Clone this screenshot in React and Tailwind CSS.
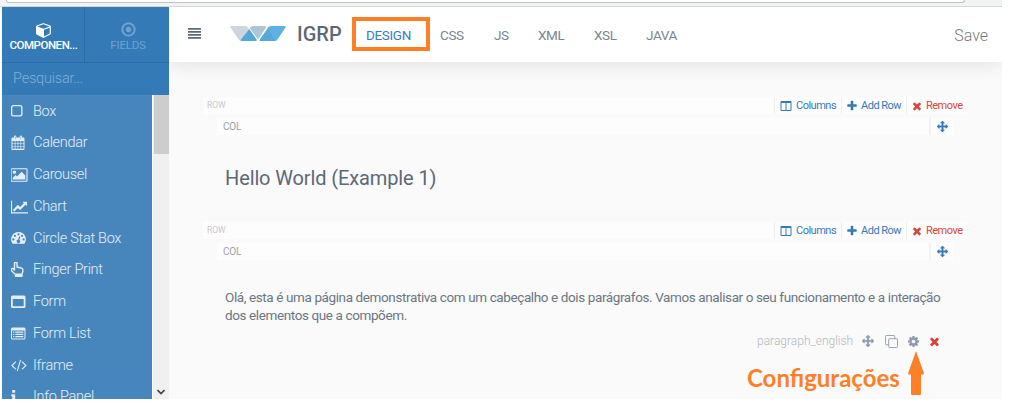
import React from "react";

const Icon = ({ box = "0 0 1792 1792", className, children }) => (
  <svg viewBox={box} className={`shrink-0 ${className}`} fill="currentColor" fillRule="evenodd">{children}</svg>
);

const Plus = ({ className }) => (
  <Icon className={className}><path d="M1600 736v192q0 40-28 68t-68 28h-416v416q0 40-28 68t-68 28h-192q-40 0-68-28t-28-68v-416h-416q-40 0-68-28t-28-68v-192q0-40 28-68t68-28h416v-416q0-40 28-68t68-28h192q40 0 68 28t28 68v416h416q40 0 68 28t28 68z" /></Icon>
);
const Times = ({ className }) => (
  <Icon className={className}><path d="M1490 1322q0 40-28 68l-136 136q-28 28-68 28t-68-28l-294-294-294 294q-28 28-68 28t-68-28l-136-136q-28-28-28-68t28-68l294-294-294-294q-28-28-28-68t28-68l136-136q28-28 68-28t68 28l294 294 294-294q28-28 68-28t68 28l136 136q28 28 28 68t-28 68l-294 294 294 294q28 28 28 68z" /></Icon>
);
const Cog = ({ className }) => (
  <Icon className={className}><path d="M1152 896q0-106-75-181t-181-75-181 75-75 181 75 181 181 75 181-75 75-181zm512-109v222q0 12-8 23t-20 13l-185 28q-19 54-39 91 35 50 107 138 10 12 10 25t-9 23q-27 37-99 108t-94 71q-12 0-26-9l-138-108q-44 23-91 38-16 136-29 186-7 28-36 28h-222q-14 0-24.5-8.5t-11.5-21.5l-28-184q-49-16-90-37l-141 107q-10 9-25 9-14 0-25-11-126-114-165-168-7-10-7-23 0-12 8-23 15-21 51-66.5t54-70.5q-27-50-41-99l-183-27q-13-2-21-12.5t-8-23.5v-222q0-12 8-23t19-13l186-28q14-46 39-92-40-57-107-138-10-12-10-24 0-10 9-23 26-36 98.5-107.5t94.5-71.5q13 0 26 10l138 107q44-23 91-38 16-136 29-186 7-28 36-28h222q14 0 24.5 8.5t11.5 21.5l28 184q49 16 90 37l142-107q9-9 24-9 13 0 25 10 129 119 165 170 7 8 7 22 0 12-8 23-15 21-51 66.5t-54 70.5q26 50 41 98l183 28q13 2 21 12.5t8 23.5z" /></Icon>
);
const Arrows = ({ className }) => (
  <Icon className={className}><path stroke="currentColor" strokeWidth="50" d="M1792 896q0 26-19 45l-256 256q-19 19-45 19t-45-19-19-45v-128h-384v384h128q26 0 45 19t19 45-19 45l-256 256q-19 19-45 19t-45-19l-256-256q-19-19-19-45t19-45 45-19h128v-384h-384v128q0 26-19 45t-45 19-45-19l-256-256q-19-19-19-45t19-45l256-256q19-19 45-19t45 19 19 45v128h384v-384h-128q-26 0-45-19t-19-45 19-45l256-256q19-19 45-19t45 19l256 256q19 19 19 45t-19 45-45 19h-128v384h384v-128q0-26 19-45t45-19 45 19l256 256q19 19 19 45z" /></Icon>
);
const Clone = ({ className }) => (
  <svg viewBox="0 0 14 14" className={`shrink-0 ${className}`} fill="none" stroke="currentColor">
    <rect x="4" y="4" width="9.500" height="9.500" rx="1" />
    <path d="M4 10.500h-2.500a1 1 0 0 1-1-1v-8a1 1 0 0 1 1-1h8a1 1 0 0 1 1 1v2.500" />
  </svg>
);
const Columns = ({ className }) => (
  <Icon className={className} box="0 0 12 12"><path d="M1.500 1h9a1 1 0 0 1 1 1v8a1 1 0 0 1-1 1h-9a1 1 0 0 1-1-1v-8a1 1 0 0 1 1-1zM1.500 3v7h4v-7zM6.500 3v7h4v-7z" /></Icon>
);
const Cube = ({ className }) => (
  <Icon className={className}><path d="M896 1629l640-349v-636l-640 233v752zm-64-865l698-254-698-254-698 254zm832-252v768q0 35-18 65t-49 47l-704 384q-28 16-61 16t-61-16l-704-384q-31-17-49-47t-18-65v-768q0-40 23-73t61-47l704-256q22-8 44-8t44 8l704 256q38 14 61 47t23 73z" /></Icon>
);
const DotCircle = ({ className }) => (
  <svg viewBox="0 0 14 14" className={`shrink-0 ${className}`}>
    <circle cx="7" cy="7" r="5.100" fill="none" stroke="currentColor" strokeWidth="1.700" />
    <circle cx="7" cy="7" r="2.200" fill="currentColor" />
  </svg>
);

const glyph = "h-4 w-[17px]";
const components = [
  ["Box", <Icon className={glyph} box="0 0 17 16"><path d="M2.500 2h6.500a2.500 2.500 0 0 1 2.500 2.500v6.500a2.500 2.500 0 0 1-2.500 2.500h-6.500a2.500 2.500 0 0 1-2.500-2.500v-6.500a2.500 2.500 0 0 1 2.500-2.500zM2.600 3.200a1.300 1.300 0 0 0-1.300 1.300v6.500a1.300 1.300 0 0 0 1.300 1.300h6.300a1.300 1.300 0 0 0 1.300-1.300v-6.500a1.300 1.300 0 0 0-1.300-1.300z" /></Icon>],
  ["Calendar", <Icon className={glyph} box="0.500 0 17 16"><path d="M2 2.500h1.500v-1a1 1 0 0 1 1-1h.3a1 1 0 0 1 1 1v1h3.400v-1a1 1 0 0 1 1-1h.3a1 1 0 0 1 1 1v1h1.500a1 1 0 0 1 1 1v10.500a1 1 0 0 1-1 1h-11a1 1 0 0 1-1-1v-10.500a1 1 0 0 1 1-1zM2 6v1.900h2.200v-1.900zM4.900 6v1.900h2.200v-1.900zM7.800 6v1.900h2.200v-1.900zM10.700 6v1.900h2.300v-1.900zM2 8.600v2.300h2.200v-2.300zM4.900 8.600v2.300h2.200v-2.300zM7.800 8.600v2.300h2.200v-2.300zM10.700 8.600v2.300h2.300v-2.300zM2 11.600v2.200h2.200v-2.200zM4.900 11.600v2.200h2.200v-2.200zM7.800 11.600v2.200h2.200v-2.200zM10.700 11.600v2.200h2.300v-2.200zM4.400 1.500v2.700h.5v-2.700zM10.100 1.500v2.700h.5v-2.700z" /></Icon>],
  ["Carousel", <Icon className={glyph} box="0 0 1900 1792"><path d="M576 576q0 80-56 136t-136 56-136-56-56-136 56-136 136-56 136 56 56 136zm1024 384v448h-1408v-192l320-320 160 160 512-512zm96-704h-1600q-13 0-22.500 9.500t-9.500 22.500v1216q0 13 9.500 22.500t22.500 9.500h1600q13 0 22.500-9.500t9.500-22.500v-1216q0-13-9.500-22.500t-22.500-9.500zm160 32v1216q0 66-47 113t-113 47h-1600q-66 0-113-47t-47-113v-1216q0-66 47-113t113-47h1600q66 0 113 47t47 113z" /></Icon>],
  ["Chart", <Icon className={glyph} box="0 0 2048 1792"><path d="M2048 1536v128h-2048v-1536h128v1408h1920zm-128-1248v435q0 21-19.500 29.500t-35.500-7.500l-121-121-633 633q-10 10-23 10t-23-10l-233-233-416 416-192-192 585-585q10-10 23-10t23 10l233 233 464-464-121-121q-16-16-7.500-35.500t29.500-19.500h435q14 0 23 9t9 23z" /></Icon>],
  ["Circle Stat Box", <Icon className={glyph} box="0 0 17 16"><path d="M7.500 2a7.300 7.300 0 0 1 6.200 11.200q-.3.500-.8.500h-10.800q-.5 0-.8-.5a7.300 7.300 0 0 1 6.200-11.200zM7.500 3.200a1.100 1.100 0 1 0 .01 0zM3.900 4.700a1.100 1.100 0 1 0 .01 0zM11.100 4.700a1.100 1.100 0 1 0 .01 0zM2.400 8.300a1.100 1.100 0 1 0 .01 0zM12.600 8.300a1.100 1.100 0 1 0 .01 0zM8.300 6.200l-1 3.400a1.700 1.700 0 1 0 1.100.3l1-3.400z" /></Icon>],
  ["Finger Print", <Icon className={glyph} box="0.500 0.500 17 16"><path fill="none" stroke="currentColor" strokeWidth="1.400" strokeLinejoin="round" d="M4 8.500v-6.500a1.300 1.300 0 0 1 2.600 0v3.800q1.300-.5 2 .4 1.300-.4 1.900.5 1.800-.3 1.800 1.600v1.200q0 1.300-.8 2.800v2.500h-6.500v-1.800q-1.500-1.800-3.500-3.300-1.200-1.200-.3-2.300 1.200-1 2.800 1.100z" /><path d="M5.300 12h6v2.400h-6z" /></Icon>],
  ["Form", <Icon className={glyph} box="0 0 17 16"><path d="M1.500 1.500h11.500a1.500 1.500 0 0 1 1.500 1.500v9.500a1.500 1.500 0 0 1-1.500 1.500h-11.500a1.500 1.500 0 0 1-1.500-1.500v-9.500a1.500 1.500 0 0 1 1.500-1.500zM1.800 5v7.200h10.900v-7.200z" /></Icon>],
  ["Form List", <Icon className={glyph} box="0.500 0.500 17 16"><path d="M2 2h11.500a1.500 1.500 0 0 1 1.500 1.500v9a1.500 1.500 0 0 1-1.500 1.500h-11.500a1.500 1.500 0 0 1-1.500-1.500v-9a1.500 1.500 0 0 1 1.500-1.500zM1.500 5v7.500q0 .5.500.5h11.500q.5 0 .5-.5v-7.500zM2.600 6h1.200v1.200h-1.200zM2.600 8.300h1.200v1.200h-1.200zM2.600 10.600h1.200v1.200h-1.200zM4.800 6h8v1.200h-8zM4.800 8.300h8v1.200h-8zM4.800 10.600h8v1.200h-8z" /></Icon>],
  ["Iframe", <Icon className={glyph} box="70 130 2048 1792"><path d="M681 1399l-50 50q-10 10-23 10t-23-10l-466-466q-10-10-10-23t10-23l466-466q10-10 23-10t23 10l50 50q10 10 10 23t-10 23l-393 393 393 393q10 10 10 23t-10 23zm591-1067l-373 1291q-4 13-15.500 19.500t-23.500 2.500l-62-17q-13-4-19.500-15.500t-2.500-24.500l373-1291q4-13 15.500-19.500t23.500-2.500l62 17q13 4 19.500 15.500t2.500 24.500zm657 651l-466 466q-10 10-23 10t-23-10l-50-50q-10-10-10-23t10-23l393-393-393-393q-10-10-10-23t10-23l50-50q10-10 23-10t23 10l466 466q10 10 10 23t-10 23z" /></Icon>],
  ["Info Panel", <Icon className={glyph} box="0 0 17 16"><path d="M1.200 1h3v2.700h-3zM.3 5.200h3.900v6.300h1v2h-5v-2h1v-4.300h-.9z" /></Icon>],
];

function Sidebar() {
  return (
    <aside className="flex w-[167px] shrink-0 flex-col bg-[#337ab7]">
      <div className="flex h-[56px] border-b border-[#2c6ca5]">
        <div className="flex w-[83px] flex-col items-center border-r border-[#2c6ca5] pl-px pt-[15px] text-[11.500px] font-medium leading-[14px] tracking-[-0.45px] text-white">
          <Cube className="h-4 w-4" />
          <span>COMPONEN...</span>
        </div>
        <div className="flex flex-1 flex-col items-center pl-[2px] pt-[14px] text-[11.500px] leading-[14px] tracking-[-0.2px] text-[#70a1cf]">
          <DotCircle className="h-[17px] w-[17px]" />
          <span>FIELDS</span>
        </div>
      </div>
      <div className="h-8 pl-[11px] text-[14.500px] font-light leading-[32px] tracking-[-0.2px] text-[#83afd6]">Pesquisar...</div>
      <div className="flex flex-1 overflow-hidden">
        <ul className="flex-1 overflow-hidden bg-[#4786bd]">
          {components.map(([label, icon]) => (
            <li key={label} className="flex h-[31.780px] items-center gap-[5px] pl-[9px] pt-px text-[14.500px] font-light tracking-[-0.28px] text-[#e6eff7]">
              {icon}
              <span className="whitespace-nowrap">{label}</span>
            </li>
          ))}
        </ul>
        <div className="flex w-[17px] flex-col items-center justify-between border-l border-white bg-[#f0f0f0]">
          <div className="h-[59px] w-[15px] bg-[#cdcdcd]" />
          <svg viewBox="0 0 8 6" className="mb-[4px] h-[6px] w-2" fill="none" stroke="#444" strokeWidth="1.700"><path d="M.5 1l3.500 3.500 3.500-3.500" /></svg>
        </div>
      </div>
    </aside>
  );
}

function Header() {
  const tabs = [["CSS", "w-[54px]"], ["JS", "w-[44px]"], ["XML", "w-[56px]"], ["XSL", "w-[52px]"], ["JAVA", "w-[60px]"]];
  return (
    <header className="flex h-[55px] shrink-0 items-center bg-white text-[#5d6876] shadow-[0_4px_18px_rgba(0,0,0,0.09)]">
      <svg viewBox="0 0 13 11" className="-mt-[2px] ml-[19px] h-[11px] w-[13px]" fill="#5d6876"><path d="M0 0h13v1.800h-13zM0 3h13v1.800h-13zM0 6h13v1.800h-13zM0 9h13v1.800h-13z" /></svg>
      <svg viewBox="0 0 56 16" className="-mt-[2px] ml-[29px] h-4 w-14">
        <path d="M1 0h14.500q1.500 0 2.500 1.500l1 1.500-8 12q-1.500-.3-2.300-1.500l-8.200-12q-1-1.500.5-1.500z" fill="#ced5de" />
        <path d="M22.500 0h12q2 0 1.500 1.500l-8 12-8.500-11.500z" fill="#adc5d6" />
        <path d="M19.200 3l7.800 11-1 1h-14q-2 0-1-1.500z" fill="#55a9d9" />
        <path d="M41 0h13.500q2 0 1 1.500l-8 12q-1 1.500-2.500 1.500h-14q-2 0-1-1.500l8-12q1-1.500 3-1.500z" fill="#5eb1e1" />
        <path d="M38 3l7.500 12h-14.500q-2 0-1-1.500z" fill="#55a9d9" />
      </svg>
      <span className="-mt-px ml-[11px] w-[55px] text-[20px] font-medium">IGRP</span>
      <div className="-mt-px flex h-[34px] w-[78px] items-center justify-center border-4 border-[#ff7f27] pr-[5px] pt-[3px] text-[13.500px] tracking-[-0.35px] text-[#3b7dc0]">DESIGN</div>
      <nav className="ml-[10px] flex pt-[2px] text-[13.500px] tracking-[-0.4px] text-[#7a8492]">
        {tabs.map(([name, width]) => <span key={name} className={width}>{name}</span>)}
      </nav>
      <span className="ml-auto mr-[14px] pt-[3px] text-[16px] font-light text-[#77797d]">Save</span>
    </header>
  );
}

function Toolbars() {
  const action = "flex items-center border-l border-[#eeeeee] whitespace-nowrap pt-px text-[11px] tracking-[-0.5px]";
  return (
    <div>
      <div className="flex h-[17px] w-[764px] bg-[#fdfdfd]">
        <span className="flex-1 pl-1 text-[8.500px] leading-[16px] text-[#c6c8ca]">ROW</span>
        <span className={`${action} w-[67px] pl-[5px] text-[#337ab7]`}><Columns className="mr-[4px] h-3 w-3" />Columns</span>
        <span className={`${action} w-[65px] pl-[4px] text-[#337ab7]`}><Plus className="mr-[3px] h-3 w-3" />Add Row</span>
        <span className={`${action} w-[61px] pl-[4px] text-[#d9453a]`}><Times className="mr-[3px] h-3 w-3" />Remove</span>
      </div>
      <div className="ml-[14px] mt-[4px] flex h-[17px] w-[736px] bg-[#fdfdfd]">
        <span className="flex-1 pl-[6px] text-[10px] leading-[18px] tracking-[-0.2px] text-[#9da1a6]">COL</span>
        <span className="flex w-6 items-center justify-center border-l-2 border-[#f2f2f2] text-[#337ab7]"><Arrows className="h-[11px] w-[11px]" /></span>
      </div>
    </div>
  );
}

export default function App() {
  return (
    <div className="h-[411px] w-[1010px] overflow-hidden bg-white font-['Roboto','Liberation_Sans',sans-serif]">
      <div className="h-[7px] w-[1002px] border-b border-[#d5d6d8] bg-[#f2f3f4] pl-[6px]">
        <div className="h-[3px] w-[959px] rounded-b-sm border-x border-b border-[#bfc1c4] bg-white" />
      </div>
      <div className="ml-[2px] flex h-[392px] w-[1000px] overflow-hidden">
        <Sidebar />
        <div className="flex min-w-0 flex-1 flex-col overflow-hidden bg-[#fafafa]">
          <Header />
          <main className="pl-[34px] pt-[35px]">
            <Toolbars />
            <h1 className="ml-[22px] mt-[29px] h-[58px] text-[20px] leading-[28px] tracking-[-0.12px] text-[#5d6876]">Hello World (Example 1)</h1>
            <Toolbars />
            <p className="ml-[22px] mt-[28px] whitespace-nowrap text-[13.500px] leading-[18px] tracking-[-0.39px] text-[#6c7683]">
              Olá, esta é uma página demonstrativa com um cabeçalho e dois parágrafos. Vamos analisar o seu funcionamento e a interação<br />dos elementos que a compõem.
            </p>
            <div className="ml-[554px] mt-[8px] flex h-[18px] items-center text-[#8d9aae]">
              <span className="w-[105px] text-[12px] font-light text-[#b5b8bd]">paragraph_english</span>
              <Arrows className="h-3 w-3" />
              <Clone className="ml-[11px] h-[13px] w-[13px]" />
              <Cog className="ml-[9px] h-[13px] w-[13px]" />
              <Times className="ml-[8px] h-[13px] w-[13px] text-[#dc3f35]" />
            </div>
            <div className="ml-[543px] mt-px flex">
              <span className="w-[162px] pl-px pt-[13px] font-['Lato',sans-serif] text-[24px] font-bold leading-7 text-[#ff7f27]">Configurações</span>
              <svg viewBox="0 0 16 45" className="h-[45px] w-4" fill="#ff7f27"><path d="M8 0l8 22.500q0 1-1 1h-2v19.500q0 1-1 1h-8q-1 0-1-1v-19.500h-2q-1 0-1-1z" /></svg>
            </div>
          </main>
        </div>
      </div>
    </div>
  );
}
